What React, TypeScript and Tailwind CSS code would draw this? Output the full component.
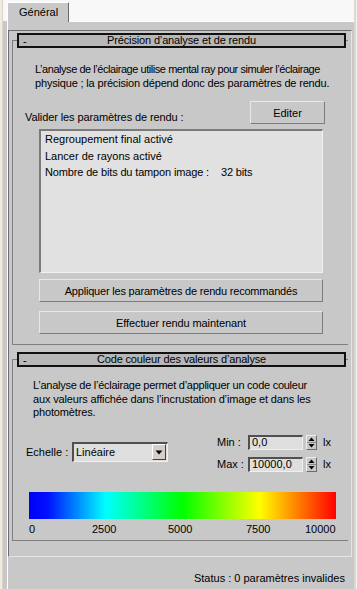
import React from "react";

function Btn({ children, className = "" }: { children: React.ReactNode; className?: string }) {
  return (
    <div
      className={
        "flex items-center justify-center whitespace-nowrap bg-[#c8c8c8] border border-t-[#e8e8e8] border-l-[#e8e8e8] border-r-[#7c7c7c] border-b-[#7c7c7c] " +
        className
      }
    >
      {children}
    </div>
  );
}

function Title({ children }: { children: React.ReactNode }) {
  return (
    <div className="relative z-10 mt-[2px] ml-[5px] w-[329px] h-[15px] bg-[#b8b8b8] border-2 border-[#111] flex items-center">
      <span className="absolute left-[4px] top-[-1px]">-</span>
      <span className="flex-1 text-center leading-[11px] tracking-[-0.15px] whitespace-nowrap">{children}</span>
    </div>
  );
}

function Spinner() {
  return (
    <div className="w-[11px] h-[15px] ml-[3px] bg-[#c8c8c8] border border-t-[#eeeeee] border-l-[#eeeeee] border-r-[#6c6c6c] border-b-[#6c6c6c] flex flex-col items-center justify-center">
      <svg width="9" height="13" viewBox="0 0 9 13">
        <path d="M4.5 1.5 L7.5 5 L1.5 5 Z" fill="#000" />
        <line x1="0" y1="6.5" x2="9" y2="6.5" stroke="#8a8a8a" strokeWidth="1" />
        <path d="M1.5 8 L7.5 8 L4.5 11.5 Z" fill="#000" />
      </svg>
    </div>
  );
}

function NumField({ label, value }: { label: string; value: string }) {
  return (
    <div className="flex items-center h-[15px]">
      <span className="w-[31px]">{label}</span>
      <div className="w-[55px] h-[15px] bg-[#dedede] border-t-2 border-l-2 border-[#505050] border-r border-b border-r-[#f0f0f0] border-b-[#f0f0f0] pl-[2px] leading-[11px]">
        {value}
      </div>
      <Spinner />
      <span className="ml-[6px]">lx</span>
    </div>
  );
}

export default function App() {
  return (
    <div className="w-[357px] h-[589px] overflow-hidden flex bg-[#c8c8c8] text-[11px] leading-[14px] text-black font-['Liberation_Sans',Arial,sans-serif]">
      <div className="w-[2px] bg-[#eeebe2]" />
      <div className="w-[1px] bg-[#d8d4c8]" />
      <div className="w-[351px] flex flex-col">
        <div className="h-[21px] bg-[#f8f8f8] flex items-end pl-[4px]">
          <div className="h-[20px] w-[62px] -mb-[1px] relative z-10 bg-[#c8c8c8] border-t border-l border-white border-r border-r-[#6a6a6a] pl-[11px] pt-[2px]">
            Général
          </div>
        </div>
        <div className="flex-1 flex flex-col ml-[4px] border-t border-l border-white">
          <div className="mt-[8px] w-[344px] h-[527px] border-t border-l border-[#6c6c6c] border-r border-b border-r-[#e4e4e4] border-b-[#e4e4e4] flex flex-col">
            {/* Rollout 1 */}
            <div className="ml-[3px] w-[336px] flex flex-col">
              <Title>Précision d’analyse et de rendu</Title>
              <div className="-mt-[8px] border-t border-l border-b border-[#7e7e7e] flex flex-col pt-[22px] pb-[10px]">
                <div className="pl-[22px] leading-[13.5px] whitespace-nowrap">
                  <div className="tracking-[-0.45px]">L’analyse de l’éclairage utilise mental ray pour simuler l’éclairage</div>
                  <div className="tracking-[-0.17px]">physique ; la précision dépend donc des paramètres de rendu.</div>
                </div>
                <div className="mt-[11px] flex items-end">
                  <span className="pl-[12px] flex-1 tracking-[-0.1px]">Valider les paramètres de rendu :</span>
                  <Btn className="w-[75px] h-[23px] mr-[23px]">Editer</Btn>
                </div>
                <div className="mt-[5px] ml-[26px] w-[284px] h-[144px] bg-[#e1e1e1] border-t-2 border-l-2 border-[#7a7a7a] border-r border-b border-r-[#f2f2f2] border-b-[#f2f2f2] pl-[4px] leading-[16.5px] whitespace-nowrap">
                  <div>Regroupement final activé</div>
                  <div>Lancer de rayons activé</div>
                  <div className="tracking-[-0.15px]">
                    Nombre de bits du tampon image :<span className="ml-[12px]">32 bits</span>
                  </div>
                </div>
                <Btn className="mt-[6px] ml-[26px] w-[284px] h-[23px] tracking-[-0.2px]">Appliquer les paramètres de rendu recommandés</Btn>
                <Btn className="mt-[9px] ml-[26px] w-[284px] h-[23px] tracking-[-0.1px]">Effectuer rendu maintenant</Btn>
              </div>
            </div>
            {/* Rollout 2 */}
            <div className="mt-[5px] ml-[3px] w-[336px] flex flex-col">
              <Title>Code couleur des valeurs d’analyse</Title>
              <div className="-mt-[8px] border-t border-l border-b border-[#7e7e7e] flex flex-col pt-[19px] pb-[4px]">
                <div className="pl-[20px] leading-[13.5px] whitespace-nowrap">
                  <div className="tracking-[-0.26px]">L’analyse de l’éclairage permet d’appliquer un code couleur</div>
                  <div className="tracking-[-0.15px]">aux valeurs affichée dans l’incrustation d’image et dans les</div>
                  <div className="tracking-[-0.15px]">photomètres.</div>
                </div>
                <div className="mt-[15px] flex items-start">
                  <div className="w-[204px] pl-[13px] pt-[7px] flex items-start">
                    <span className="w-[46px] mt-[3px]">Echelle :</span>
                    <div className="w-[96px] h-[20px] bg-[#dedede] border-t-2 border-l-2 border-[#505050] border-r border-b border-r-[#f0f0f0] border-b-[#f0f0f0] flex items-center">
                      <span className="flex-1 pl-[2px]">Linéaire</span>
                      <div className="w-[14px] h-[16px] mr-[1px] bg-[#d4d0c8] border border-t-[#ffffff] border-l-[#ffffff] border-r-[#404040] border-b-[#404040] flex items-center justify-center">
                        <svg width="8" height="5" viewBox="0 0 8 5">
                          <path d="M0.5 0.5 L7.5 0.5 L4 4.5 Z" fill="#000" />
                        </svg>
                      </div>
                    </div>
                  </div>
                  <div className="flex flex-col gap-[7px]">
                    <NumField label="Min :" value="0,0" />
                    <NumField label="Max :" value="10000,0" />
                  </div>
                </div>
                <div className="mt-[20px] ml-[16px] w-[307px] h-[27px] bg-[linear-gradient(to_right,#0000f4_0%,#0010ff_6%,#00ffff_25%,#00ff00_50%,#ffff00_75%,#ff0000_100%)]" />
                <div className="mt-[3px] ml-[16px] w-[307px] flex">
                  <span className="w-[63px]">0</span>
                  <span className="w-[76px]">2500</span>
                  <span className="w-[78px]">5000</span>
                  <span className="w-[59px]">7500</span>
                  <span className="flex-1">10000</span>
                </div>
              </div>
            </div>
          </div>
          <div className="mt-[14px] pr-[9px] text-right">Status : 0 paramètres invalides</div>
        </div>
      </div>
      <div className="w-[2px] bg-[#dcd8cc]" />
      <div className="w-[1px] bg-[#f4f4f4]" />
    </div>
  );
}
